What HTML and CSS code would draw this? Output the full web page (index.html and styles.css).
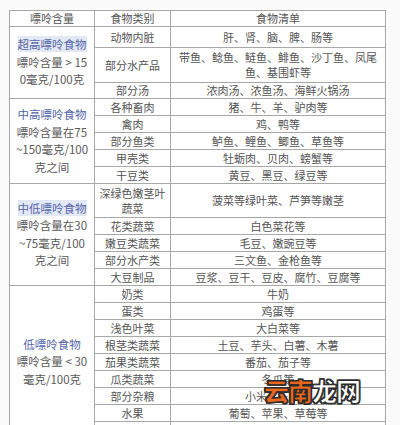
FILE: index.html
```html
<!DOCTYPE html>
<html lang="zh">
<head>
<meta charset="utf-8">
<link rel="stylesheet" href="styles.css">
</head>
<body>
<div class="page">
<table class="purine">
<colgroup><col class="c1"><col class="c2"><col class="c3"></colgroup>
<tr class="h16"><th>嘌呤含量</th><th>食物类别</th><th>食物清单</th></tr>

<tr class="h21"><td rowspan="3" class="grp"><span class="name hl">超高嘌呤食物</span><br>嘌呤含量 &gt; 15<br>0毫克/100克</td><td>动物内脏</td><td>肝、肾、脑、脾、肠等</td></tr>
<tr class="h35"><td>部分水产品</td><td class="two">带鱼、鲶鱼、鲢鱼、鲱鱼、沙丁鱼、凤尾<br>鱼、基围虾等</td></tr>
<tr class="h15"><td>部分汤</td><td>浓肉汤、浓鱼汤、海鲜火锅汤</td></tr>

<tr class="h17"><td rowspan="5" class="grp"><span class="name">中高嘌呤食物</span><br>嘌呤含量在75<br>~150毫克/100<br>克之间</td><td>各种畜肉</td><td>猪、牛、羊、驴肉等</td></tr>
<tr class="h17"><td>禽肉</td><td>鸡、鸭等</td></tr>
<tr class="h17"><td>部分鱼类</td><td>鲈鱼、鲤鱼、鲫鱼、草鱼等</td></tr>
<tr class="h17"><td>甲壳类</td><td>牡蛎肉、贝肉、螃蟹等</td></tr>
<tr class="h17"><td>干豆类</td><td>黄豆、黑豆、绿豆等</td></tr>

<tr class="h34"><td rowspan="5" class="grp"><span class="name hl">中低嘌呤食物</span><br>嘌呤含量在30<br>~75毫克/100<br>克之间</td><td class="two">深绿色嫩茎叶<br>蔬菜</td><td>菠菜等绿叶菜、芦笋等嫩茎</td></tr>
<tr class="h17"><td>花类蔬菜</td><td>白色菜花等</td></tr>
<tr class="h17"><td>嫩豆类蔬菜</td><td>毛豆、嫩豌豆等</td></tr>
<tr class="h17"><td>部分水产类</td><td>三文鱼、金枪鱼等</td></tr>
<tr class="h17"><td>大豆制品</td><td>豆浆、豆干、豆皮、腐竹、豆腐等</td></tr>

<tr class="h17"><td rowspan="9" class="grp"><span class="name">低嘌呤食物</span><br>嘌呤含量 &lt; 30<br>毫克/100克</td><td>奶类</td><td>牛奶</td></tr>
<tr class="h17"><td>蛋类</td><td>鸡蛋等</td></tr>
<tr class="h17"><td>浅色叶菜</td><td>大白菜等</td></tr>
<tr class="h17"><td>根茎类蔬菜</td><td>土豆、芋头、白薯、木薯</td></tr>
<tr class="h17"><td>茄果类蔬菜</td><td>番茄、茄子等</td></tr>
<tr class="h17"><td>瓜类蔬菜</td><td>冬瓜等</td></tr>
<tr class="h17"><td>部分杂粮</td><td>小米、玉米等</td></tr>
<tr class="h17"><td>水果</td><td>葡萄、苹果、草莓等</td></tr>
<tr class="h17"><td>坚果类</td><td>核桃、杏仁等</td></tr>
</table>
<div class="mark"><span class="mk-a">云南</span><span class="mk-b">龙网</span></div>
</div>
</body>
</html>
```
FILE: styles.css
```css
html, body {
  margin: 0;
  padding: 0;
  background: #fbfbfb;
  height: 425px;
  overflow: hidden;
}
.page {
  position: relative;
  padding: 10px 0 0 9px;
  font-family: "Noto Sans CJK SC", "Noto Sans", sans-serif;
  color: #555;
}
.purine {
  border-collapse: collapse;
  table-layout: fixed;
  width: 376px;
  background: #fff;
  font-size: 11px;
  line-height: 15px;
}
.c1 { width: 85px; }
.c2 { width: 76px; }
.c3 { width: 215px; }
.purine th, .purine td {
  border: 1px solid #a8a8a8;
  padding: 0;
  text-align: center;
  vertical-align: middle;
  font-weight: normal;
  white-space: nowrap;
  overflow: hidden;
}
.purine td.grp {
  line-height: 17.5px;
  font-size: 11.5px;
  color: #5a5a5a;
}
.name { color: #5566a8; }
.hl { background: #e3e8f5; }
.h16 { height: 16px; }
.h21 { height: 21px; }
.h35 { height: 35px; }
.h15 { height: 15px; }
.h17 { height: 17px; }
.h34 { height: 34px; }
.two { line-height: 15px; }
.mark {
  position: absolute;
  left: 264px;
  top: 374px;
  font-family: "Noto Sans CJK SC", sans-serif;
  font-weight: 900;
  font-size: 25px;
  line-height: 32px;
  letter-spacing: -1px;
  -webkit-text-stroke: 1px #2a2a2a;
  text-shadow: 1px 1px 0 #2a2a2a, -1px -1px 0 #2a2a2a, 1px -1px 0 #2a2a2a, -1px 1px 0 #2a2a2a;
}
.mk-a { color: #e8661e; }
.mk-b { color: #ffffff; }
```
